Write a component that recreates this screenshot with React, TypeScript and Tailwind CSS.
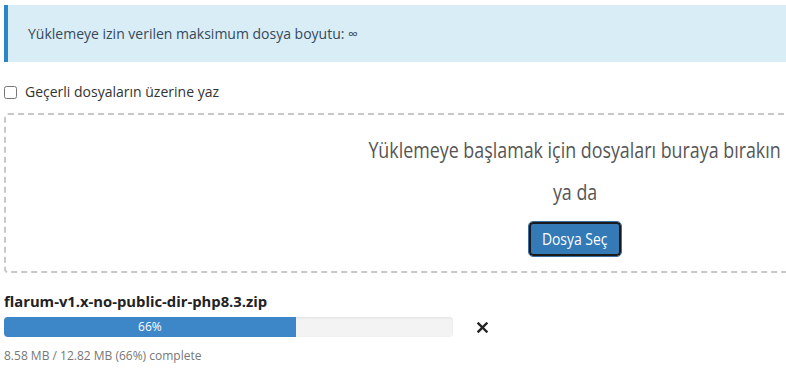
import React from 'react';

const App = () => {
  const percent = 66;

  return (
    <div className="w-[786px] h-[368px] overflow-hidden bg-white font-['Open_Sans',sans-serif] text-[#333]">
      <div className="pl-1 pt-[5px] w-[1200px]">
        {/* info alert */}
        <div className="h-[57px] flex items-center bg-[#d9edf7] border-l-4 border-[#2a86c8] pl-5 text-[14px] text-[#34495a]">
          Yüklemeye izin verilen maksimum dosya boyutu: ∞
        </div>

        <label className="mt-[20px] flex items-center gap-2 text-[14px] text-[#333] leading-5">
          <input type="checkbox" className="w-[13px] h-[13px] m-0" />
          Geçerli dosyaların üzerine yaz
        </label>

        {/* drop zone */}
        <div className="mt-[11px] h-[160px] w-[1142px] border-2 border-dashed border-[#c8c8c8] rounded flex flex-col items-center pt-[21px]">
          <p className="text-[21px] leading-7 text-[#555] whitespace-nowrap scale-x-[0.85]">
            Yüklemeye başlamak için dosyaları buraya bırakın
          </p>
          <p className="mt-[14px] text-[21px] leading-7 text-[#555] scale-x-[0.85]">ya da</p>
          <button className="mt-[16px] w-[92px] h-[34px] rounded-[4px] bg-[#337ab7] text-white text-[16px] border-2 border-[#1a1a1a] outline outline-1 outline-[#3a6fa8] outline-offset-0">
            <span className="inline-block whitespace-nowrap scale-x-[0.87]">Dosya Seç</span>
          </button>
        </div>

        {/* upload item */}
        <div className="mt-[18px] text-[14.8px] font-bold text-[#222] leading-5">
          flarum-v1.x-no-public-dir-php8.3.zip
        </div>
        <div className="mt-[6px] flex items-center">
          <div className="w-[449px] h-[20px] bg-[#f3f3f3] rounded-[4px] overflow-hidden shadow-[inset_0_1px_2px_rgba(0,0,0,0.08)]">
            <div className="h-full w-[65%] bg-[#3d87c9] text-white text-[12px] leading-5 text-center">
              {percent}%
            </div>
          </div>
          <svg className="ml-[24px]" width="11" height="11" viewBox="0 0 11 11">
            <path d="M1.5 1.5 L9.5 9.5 M9.5 1.5 L1.5 9.5" stroke="#222" strokeWidth="2.4" strokeLinecap="square" />
          </svg>
        </div>
        <div className="mt-[11px] text-[12px] text-[#777] leading-4">
          8.58 MB / 12.82 MB ({percent}%) complete
        </div>
      </div>
    </div>
  );
};

export default App;
